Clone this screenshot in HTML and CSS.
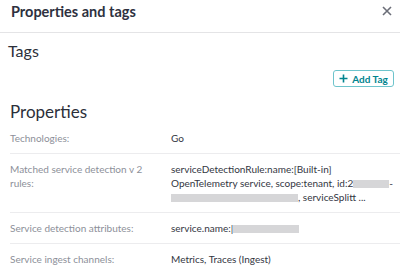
FILE: index.html
```html
<!DOCTYPE html>
<html>
<head>
<meta charset="utf-8">
<link rel="stylesheet" href="styles.css">
</head>
<body>
<div class="panel">
  <div class="header">
    <div class="title">Properties and tags</div>
    <button class="close" aria-label="Close">
      <svg width="10" height="10" viewBox="0 0 10 10"><path d="M1 1L9 9M9 1L1 9" stroke="#6b6e78" stroke-width="1.6" fill="none"/></svg>
    </button>
  </div>
  <div class="section-title tags-title">Tags</div>
  <div class="btn-row">
    <button class="add-tag">
      <svg width="9" height="9" viewBox="0 0 9 9"><path d="M4.5 0.5V8.5M0.5 4.5H8.5" stroke="#00848f" stroke-width="1.6" fill="none"/></svg>
      <span>Add Tag</span>
    </button>
  </div>
  <div class="section-title props-title">Properties</div>
  <div class="rows">
    <div class="row">
      <div class="label">Technologies:</div>
      <div class="value">Go</div>
    </div>
    <div class="row">
      <div class="label">Matched service detection v 2 rules:</div>
      <div class="value nw">serviceDetectionRule:name:[Built-in]<br>OpenTelemetry service, scope:tenant, id:2<span class="blur b1"></span>-<br><span class="blur b2"></span>, serviceSplitt ...</div>
    </div>
    <div class="row">
      <div class="label">Service detection attributes:</div>
      <div class="value">service.name:|<span class="blur b3"></span></div>
    </div>
    <div class="row last">
      <div class="label">Service ingest channels:</div>
      <div class="value">Metrics, Traces (Ingest)</div>
    </div>
  </div>
</div>
</body>
</html>
```
FILE: styles.css
```css
* { box-sizing: border-box; }
body {
  margin: 0;
  background: #fff;
  font-family: Lato, "Liberation Sans", sans-serif;
  color: #2c2f3a;
}
.panel { width: 400px; }
.header {
  height: 33px;
  border-bottom: 1px solid #e4e4e6;
  display: flex;
  justify-content: space-between;
  align-items: flex-start;
  padding: 0 4px 0 11px;
}
.title {
  font-size: 14.5px;
  font-weight: 700;
  line-height: 24px;
  color: #2e3140;
}
.close {
  border: 0;
  background: none;
  padding: 0;
  width: 12px;
  height: 12px;
  margin-top: 5px;
  margin-right: 3px;
  display: flex;
  align-items: center;
  justify-content: center;
}
.section-title {
  font-size: 16px;
  line-height: 22px;
  font-weight: 400;
}
.tags-title { margin-top: 7px; padding-left: 8px; }
.props-title { margin-top: 14px; padding-left: 10px; font-size: 17px; }
.btn-row {
  display: flex;
  justify-content: flex-end;
  padding-right: 6px;
  margin-top: 8px;
}
.add-tag {
  height: 17px;
  width: 61px;
  border: 1.5px solid #6ec4cc;
  border-radius: 3px;
  background: #fff;
  color: #00848f;
  font-family: inherit;
  font-size: 10px;
  font-weight: 700;
  display: flex;
  align-items: center;
  justify-content: center;
  gap: 4px;
  padding: 0;
}
.rows { padding-left: 10px; }
.row {
  display: grid;
  grid-template-columns: 161px 1fr;
  padding: 8px 0;
  border-bottom: 1px solid #ececee;
  font-size: 10px;
  line-height: 14px;
}
.row.last { border-bottom: 0; }
.label { color: #8d9099; padding-right: 4px; }
.value { color: #33363f; }
.nw { white-space: nowrap; }
.blur {
  display: inline-block;
  height: 8px;
  background: #d6d6d8;
  vertical-align: -1px;
}
.b1 { width: 36px; }
.b2 { width: 127px; }
.b3 { width: 66px; }
```
